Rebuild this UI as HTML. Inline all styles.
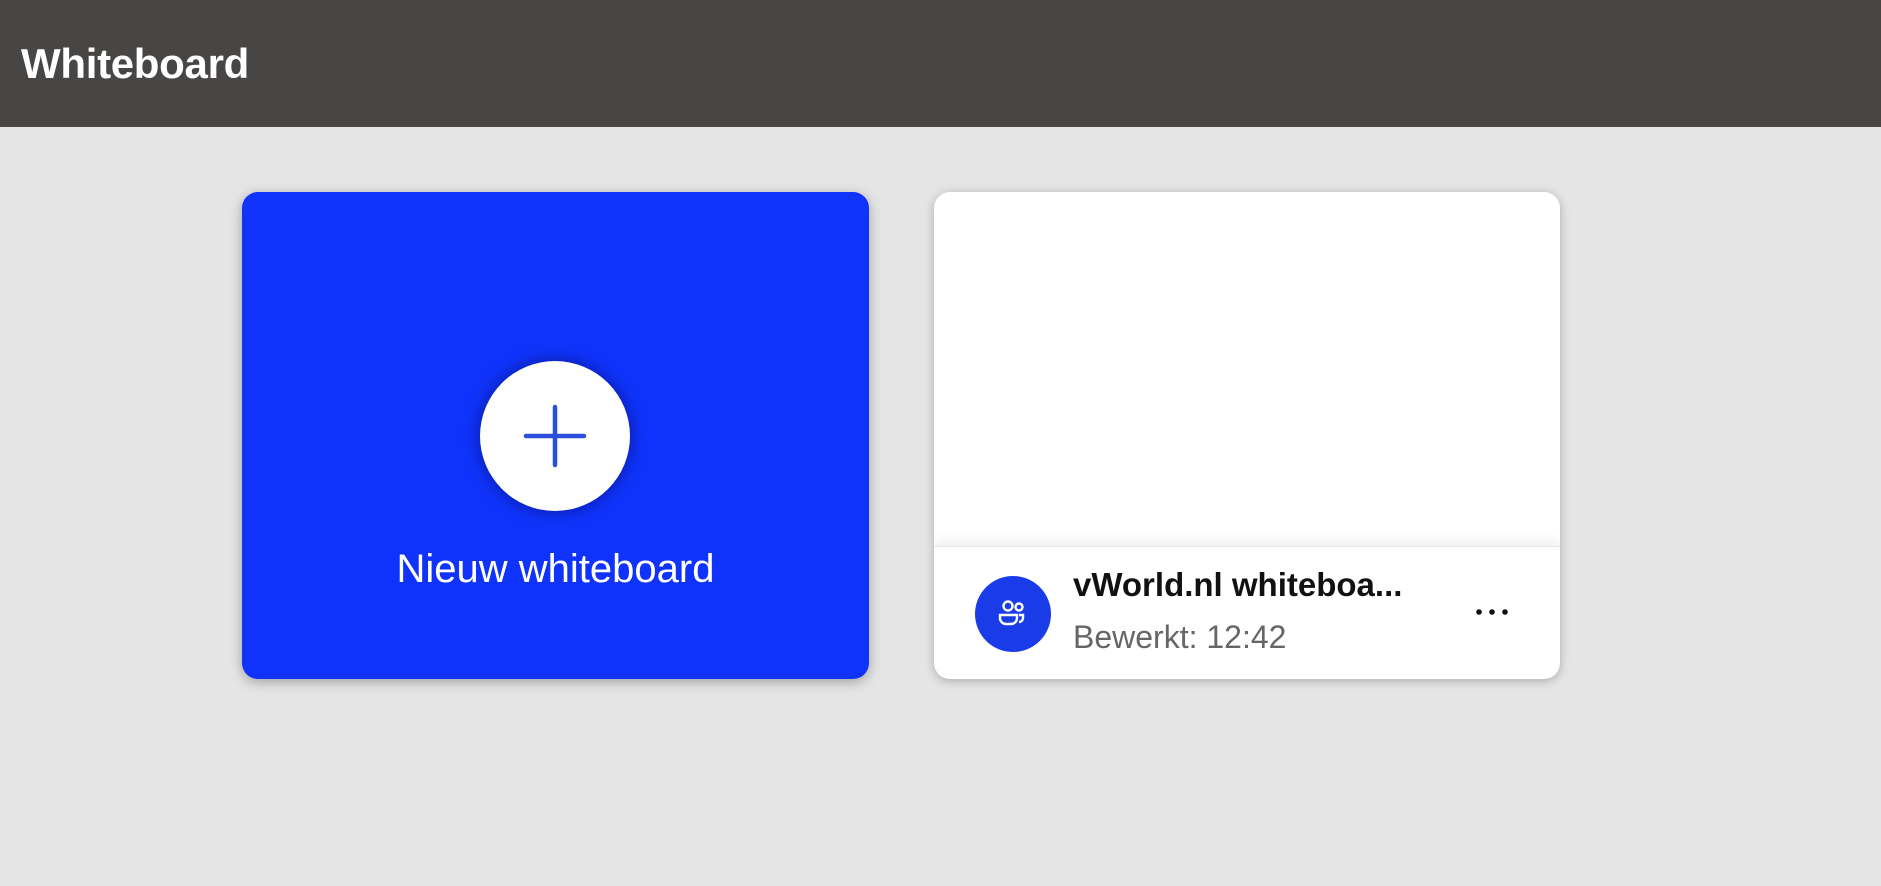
<!DOCTYPE html>
<html><head><style>
body{margin:0;width:1881px;height:886px;background:#e5e5e5;font-family:"Liberation Sans",sans-serif;overflow:hidden;position:relative}
.hdr{position:absolute;left:0;top:0;width:1881px;height:127px;background:#484644}
.hdr span{position:absolute;left:21px;top:40px;font-size:42px;font-weight:bold;color:#fff;letter-spacing:-0.3px}
.blue{position:absolute;left:242px;top:192px;width:627px;height:487px;background:#0f33fa;border-radius:16px;box-shadow:0 3px 12px rgba(0,0,0,.3)}
.plus{position:absolute;left:238px;top:169px;width:150px;height:150px;border-radius:50%;background:#fff;box-shadow:0 0 16px rgba(0,0,60,.5)}
.blue .t{position:absolute;left:0;width:100%;top:355px;text-align:center;color:#fff;font-size:40px}
.card{position:absolute;left:934px;top:192px;width:626px;height:487px;background:#fff;border-radius:16px;box-shadow:0 2px 10px rgba(0,0,0,.25);overflow:hidden}
.foot{position:absolute;left:0;top:354px;width:100%;height:133px;border-top:1px solid #e8e8e8;box-shadow:0 -6px 10px rgba(0,0,0,.06)}
.av{position:absolute;left:41px;top:29px;width:76px;height:76px;border-radius:50%;background:#1a3be8}
.ti{position:absolute;left:139px;top:19px;font-size:33px;font-weight:bold;color:#111}
.su{position:absolute;left:139px;top:72px;font-size:32px;color:#666}
.dots{position:absolute;left:540px;top:57px}
</style></head><body>
<div class="hdr"><span>Whiteboard</span></div>
<div class="blue">
<div class="plus"><svg width="150" height="150"><path d="M75 46V104M46 75H104" stroke="#2b4fd8" stroke-width="4.5" stroke-linecap="round"/></svg></div>
<div class="t">Nieuw whiteboard</div>
</div>
<div class="card">
<div class="foot">
<div class="av"><svg width="76" height="76" fill="none" stroke="#fff" stroke-width="2.4"><circle cx="33" cy="30" r="4.5"/><circle cx="44" cy="31" r="3.5"/><path d="M25 39h17v3a6 6 0 0 1-6 6h-5a6 6 0 0 1-6-6z"/><path d="M44 39h4v3a4 4 0 0 1-4 4"/></svg></div>
<div class="ti">vWorld.nl whiteboa...</div>
<div class="su">Bewerkt: 12:42</div>
<div class="dots"><svg width="40" height="10"><circle cx="5" cy="5" r="2.8" fill="#111"/><circle cx="18" cy="5" r="2.8" fill="#111"/><circle cx="31" cy="5" r="2.8" fill="#111"/></svg></div>
</div>
</div>
</body></html>
